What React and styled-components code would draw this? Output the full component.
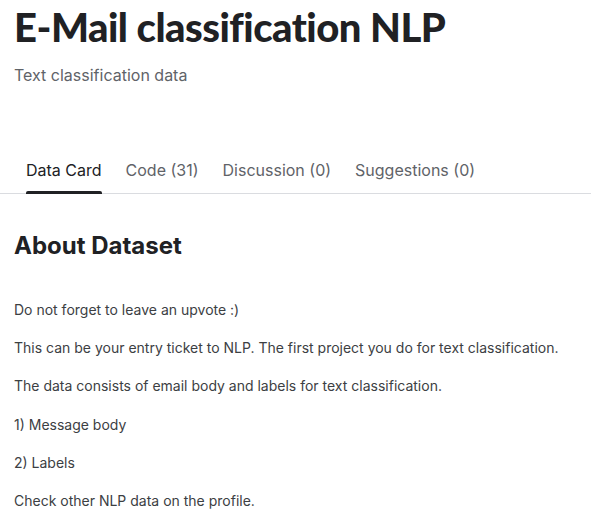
import styled, { createGlobalStyle } from "styled-components";

const GlobalStyle = createGlobalStyle`
  html, body {
    margin: 0;
    padding: 0;
    background: #ffffff;
  }
  body {
    font-family: Inter, "Noto Sans", "Liberation Sans", sans-serif;
    color: #202124;
  }
`;

const Page = styled.div`
  width: 591px;
  padding-top: 2px;
`;

const Header = styled.header`
  padding: 0 14px;
`;

const Title = styled.h1`
  margin: 0;
  font-family: Lato, "Liberation Sans", sans-serif;
  font-weight: 900;
  font-size: 40px;
  line-height: 50px;
  color: #202124;
  letter-spacing: -0.5px;
  font-variant-ligatures: none;
`;

const Subtitle = styled.p`
  margin: 11px 0 0;
  font-size: 16px;
  line-height: 24px;
  color: #5f6368;
`;

const TabList = styled.nav`
  display: flex;
  gap: 24px;
  margin-top: 71px;
  padding-left: 26px;
  box-shadow: inset 0 -1px 0 #dadce0;
`;

const Tab = styled.div`
  position: relative;
  font-size: 16px;
  line-height: 24px;
  padding-bottom: 12px;
  color: ${({ $active }) => ($active ? "#202124" : "#5f6368")};

  &::after {
    content: "";
    display: ${({ $active }) => ($active ? "block" : "none")};
    position: absolute;
    left: 0;
    right: 0;
    bottom: 0;
    height: 3px;
    border-radius: 2px 2px 0 0;
    background: #202124;
  }
`;

const Content = styled.section`
  padding: 0 14px;
`;

const SectionTitle = styled.h2`
  margin: 36px 0 0;
  font-size: 24px;
  line-height: 32px;
  font-weight: 700;
  color: #202124;
`;

const Body = styled.div`
  margin-top: 38px;
`;

const Para = styled.p`
  margin: 0 0 18.2px;
  font-size: 14px;
  line-height: 20px;
  color: #3c4043;
`;

const tabs = [
  { label: "Data Card", active: true },
  { label: "Code (31)" },
  { label: "Discussion (0)" },
  { label: "Suggestions (0)" },
];

const paragraphs = [
  "Do not forget to leave an upvote :)",
  "This can be your entry ticket to NLP. The first project you do for text classification.",
  "The data consists of email body and labels for text classification.",
  "1) Message body",
  "2) Labels",
  "Check other NLP data on the profile.",
];

export default function App() {
  return (
    <Page>
      <GlobalStyle />
      <Header>
        <Title>E-Mail classification NLP</Title>
        <Subtitle>Text classification data</Subtitle>
      </Header>
      <TabList>
        {tabs.map((t) => (
          <Tab key={t.label} $active={t.active}>
            {t.label}
          </Tab>
        ))}
      </TabList>
      <Content>
        <SectionTitle>About Dataset</SectionTitle>
        <Body>
          {paragraphs.map((p) => (
            <Para key={p}>{p}</Para>
          ))}
        </Body>
      </Content>
    </Page>
  );
}
